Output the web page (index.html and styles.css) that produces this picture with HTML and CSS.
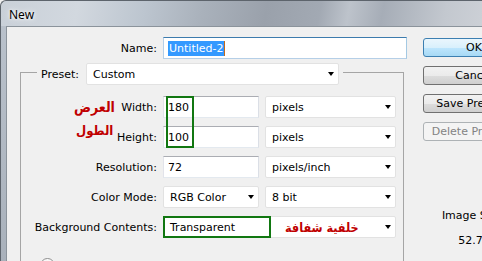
FILE: index.html
```html
<!DOCTYPE html>
<html>
<head>
  <title>New</title>
  <link rel="stylesheet" href="styles.css">
</head>
<body>
  <div class="window">
    <div class="titlebar">New</div>
    <div class="frame">
      <div class="client">
        <div class="form">
          <div class="name-row">
            <span class="label">Name:</span>
            <div class="textbox focused"><span class="selected">Untitled-2</span><span class="caret"></span></div>
          </div>

          <fieldset class="group">
            <legend class="preset">
              <span class="label">Preset:</span>
              <div class="select preset-select">Custom<span class="arrow"></span></div>
            </legend>

            <div class="row">
              <span class="label">Width:</span>
              <div class="textbox">180</div>
              <div class="select">pixels<span class="arrow"></span></div>
            </div>
            <div class="row">
              <span class="label">Height:</span>
              <div class="textbox">100</div>
              <div class="select">pixels<span class="arrow"></span></div>
            </div>
            <div class="row">
              <span class="label">Resolution:</span>
              <div class="textbox">72</div>
              <div class="select">pixels/inch<span class="arrow"></span></div>
            </div>
            <div class="row">
              <span class="label">Color Mode:</span>
              <div class="select">RGB Color<span class="arrow"></span></div>
              <div class="select">8 bit<span class="arrow"></span></div>
            </div>
            <div class="row row-last">
              <span class="label">Background Contents:</span>
              <div class="select wide">Transparent<span class="arrow"></span></div>
            </div>
            <div class="advanced"><span class="toggle"></span></div>
          </fieldset>

          <!-- annotations drawn over the dialog -->
          <div class="mark mark-size"></div>
          <div class="mark mark-bg"></div>
          <div class="note note-width">العرض</div>
          <div class="note note-height">الطول</div>
          <div class="note note-bg">خلفية شفافة</div>
        </div>

        <div class="buttons">
          <button class="btn default">OK</button>
          <button class="btn">Cancel</button>
          <button class="btn">Save Preset...</button>
          <button class="btn" disabled>Delete Preset...</button>
          <div class="info">
            <div>Image Size:</div>
            <div>52.7K</div>
          </div>
        </div>
      </div>
    </div>
  </div>
</body>
</html>
```

FILE: styles.css
```css
body {
  margin: 0;
  font-family: "DejaVu Sans", Tahoma, sans-serif;
  font-size: 11px;
  color: #000;
  background: #f0f0f0;
}
.window {
  width: 482px;
  height: 261px;
  overflow: hidden;
}
.titlebar {
  box-sizing: border-box;
  height: 26px;
  padding: 5px 0 0 8px;
  font-family: "Noto Sans", "Segoe UI", sans-serif;
  font-size: 12px;
  border-top: 1px solid #5d646c;
  border-left: 1px solid #5d646c;
  border-top-left-radius: 6px;
  background: linear-gradient(100deg, #c9d0d8 0%, #d2d8df 16%, #bcc5cf 30%, #a9b1bb 42%, #9aa1ab 55%, #a2a9b3 66%, #bdc3cb 72%, #a6adb7 79%, #c3c8cf 92%, #ccd0d6 100%);
  text-shadow: 0 0 6px #fff, 0 0 3px #fff;
}
.frame {
  display: flex;
  height: 235px;
  padding-left: 5px;
  border-left: 1px solid #5d646c;
  background: linear-gradient(180deg, #b9c1cb, #a9b1bb);
}
.client {
  flex: 1;
  display: flex;
  background: #f0f0f0;
  border-top: 1px solid #8b939b;
  border-left: 1px solid #8b939b;
}
.form {
  position: relative;
  padding: 10px 0 0 13px;
}
.label {
  text-align: right;
  align-self: center;
  white-space: nowrap;
}
.name-row {
  display: grid;
  grid-template-columns: 137px 244px;
  column-gap: 6px;
  height: 22px;
}
.textbox {
  box-sizing: border-box;
  height: 22px;
  display: flex;
  align-items: center;
  padding: 0 4px;
  background: #fff;
  border: 1px solid;
  border-color: #abadb3 #dbdfe6 #e3e9ef #e2e3ea;
}
.textbox.focused {
  border-color: #3d7bad #a4c9e3 #b5cfe7 #b5cfe7;
}
.selected {
  display: inline-block;
  line-height: 15px;
  padding: 0 1px;
  background: #3399ff;
  color: #fff;
}
.caret {
  display: inline-block;
  width: 1px;
  height: 15px;
  background: #c46a1c;
}
.select {
  box-sizing: border-box;
  height: 22px;
  display: flex;
  align-items: center;
  padding-left: 6px;
  background: #fff;
  border: 1px solid #e2e2e2;
  border-radius: 2px;
}
.arrow {
  margin-left: auto;
  margin-right: 4px;
  border-left: 3px solid transparent;
  border-right: 3px solid transparent;
  border-top: 4px solid #000;
}
.group {
  box-sizing: border-box;
  width: 384px;
  min-width: 0;
  margin: 0;
  padding: 11px 0 30px 0;
  border: 1px solid #a5a5a5;
}
.preset {
  display: flex;
  align-items: center;
  gap: 6px;
  margin-left: 16px;
  padding: 4px 4px 0;
}
.preset .label {
  width: 39px;
  text-align: left;
}
.preset-select {
  width: 253px;
}
.row {
  display: grid;
  grid-template-columns: 136px 96px 131px;
  column-gap: 6px;
  height: 22px;
  margin-bottom: 8px;
}
.row-last {
  margin-bottom: 20px;
}
.wide {
  grid-column: 2 / 4;
}
.advanced {
  padding-left: 19px;
}
.toggle {
  display: block;
  box-sizing: border-box;
  width: 15px;
  height: 15px;
  border: 1px solid #8f8f8f;
  border-radius: 50%;
  background: linear-gradient(180deg, #fcfcfc, #dcdcdc);
}
.mark {
  position: absolute;
  box-sizing: border-box;
  border: 2px solid #117711;
}
.mark-size {
  left: 159px;
  top: 69px;
  width: 28px;
  height: 52px;
}
.mark-bg {
  left: 156px;
  top: 189px;
  width: 108px;
  height: 22px;
}
.note {
  position: absolute;
  font-family: "DejaVu Sans", sans-serif;
  font-stretch: condensed;
  font-weight: bold;
  font-size: 14px;
  line-height: 18px;
  color: #c00000;
  white-space: nowrap;
}
.note-width {
  left: 67px;
  top: 71px;
}
.note-height {
  left: 69px;
  top: 95px;
  font-size: 13px;
}
.note-bg {
  left: 278px;
  top: 192px;
  font-size: 12.5px;
}
.buttons {
  display: flex;
  flex-direction: column;
  gap: 9px;
  width: 102px;
  flex-shrink: 0;
  margin-left: 16px;
  padding-top: 11px;
}
.btn {
  box-sizing: border-box;
  height: 19px;
  padding: 0;
  font-family: inherit;
  font-size: 11px;
  color: #000;
  white-space: nowrap;
  border: 1px solid #707070;
  border-radius: 3px;
  background: linear-gradient(180deg, #f2f2f2 0%, #ebebeb 50%, #dddddd 51%, #cfcfcf 100%);
}
.btn.default {
  border-color: #3c7fb1;
  background: linear-gradient(180deg, #eaf6fd 0%, #d9f0fc 50%, #bee6fd 51%, #a7d9f5 100%);
}
.btn:disabled {
  color: #838383;
  border-color: #adb2b5;
  background: #f4f4f4;
}
.info {
  margin-top: 59px;
  text-align: center;
  line-height: 14px;
}
.info div + div {
  margin-top: 11px;
}
```
